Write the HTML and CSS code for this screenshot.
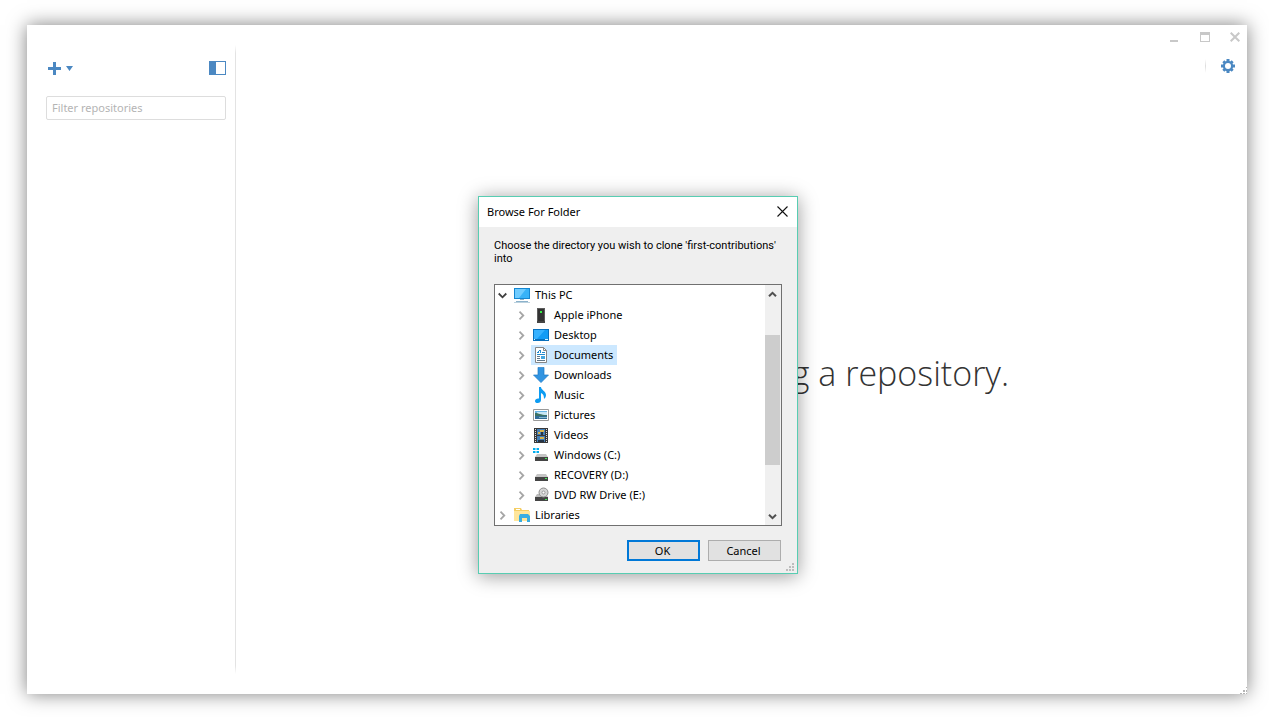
FILE: index.html
```html
<!DOCTYPE html>
<html lang="en">
<head>
<meta charset="utf-8">
<title>Browse For Folder</title>
<link rel="stylesheet" href="styles.css">
</head>
<body>
<div class="window">
  <aside class="sidebar">
    <div class="sidebar-tools">
      <button class="icon-button" aria-label="Add repository">
        <svg width="26" height="14" viewBox="0 0 26 14"><path fill="#4b88c2" d="M5 1h3v5h5v3H8v5H5V9H0V6h5zM18 5h7l-3.500 5z"/></svg>
      </button>
      <button class="icon-button" aria-label="Toggle sidebar">
        <svg width="17" height="14" viewBox="0 0 17 14"><path fill="#4b88c2" fill-rule="evenodd" d="M0 0h17v14H0zM7 1v12h9V1z"/></svg>
      </button>
    </div>
    <input class="filter" type="text" placeholder="Filter repositories" aria-label="Filter repositories">
  </aside>
  <div class="divider"></div>
  <main class="content">
    <div class="window-controls">
      <button class="icon-button" aria-label="Minimize"><svg width="10" height="10" viewBox="0 0 10 10"><path fill="#c8c8c8" d="M0 8h8v2H0z"/></svg></button>
      <button class="icon-button" aria-label="Maximize"><svg width="10" height="10" viewBox="0 0 10 10"><path fill="#c8c8c8" fill-rule="evenodd" d="M0 0h10v10H0zM1 3v6h8V3z"/></svg></button>
      <button class="icon-button" aria-label="Close window"><svg width="10" height="10" viewBox="0 0 10 10"><path stroke="#c8c8c8" stroke-width="2" d="M.7.7l8.600 8.600M9.300.7L.7 9.300"/></svg></button>
    </div>
    <div class="settings">
      <span class="settings-divider"></span>
      <button class="icon-button" aria-label="Settings"><svg width="14" height="14" viewBox="-7 -7 14 14"><g fill="#4b88c2"><path d="M-1.500-7h3v14h-3zM-7-1.500h14v3H-7z"/><path transform="rotate(45)" d="M-1.400-6.600h2.800V6.600h-2.800zM-6.600-1.400H6.600v2.800H-6.600z"/><circle r="5.200"/></g><circle r="3" fill="#fff"/></svg></button>
    </div>
    <h1 class="welcome">Get started by adding a repository.</h1>
  </main>
  <svg class="window-grip" width="7" height="7" viewBox="0 0 7 7"><path fill="#b4b4b4" d="M6 0h1v1H6zM3 3h2v2H3zM6 3h1v2H6zM0 6h2v1H0zM3 6h2v1H3zM6 6h1v1H6z"/></svg>

  <section class="dialog" role="dialog" aria-labelledby="dialog-title">
    <header class="dialog-head">
      <h2 id="dialog-title" class="dialog-title">Browse For Folder</h2>
      <button class="icon-button" aria-label="Close"><svg width="11" height="11" viewBox="0 0 11 11"><path stroke="#111" stroke-width="1.100" d="M.5.5l10 10M10.500.5l-10 10"/></svg></button>
    </header>
    <div class="dialog-body">
      <p class="prompt">Choose the directory you wish to clone 'first-contributions' into</p>
      <div class="tree-box">
        <ul class="tree" role="tree">
          <li class="row" role="treeitem" aria-expanded="true">
            <svg class="chevron" viewBox="0 0 9 9"><path fill="none" stroke="#404040" stroke-width="1.800" d="M.7 2.500l3.800 3.800 3.800-3.800"/></svg>
            <span class="item"><svg class="icon" viewBox="0 0 16 16"><path fill="#1587d1" d="M0 1h16v11H0z"/><path fill="#38b3f8" d="M1 2h14v9H1z"/><path fill="#70ccff" d="M1 2h11L5 11H1z"/><path fill="#8cb2cb" d="M6 12h4v1H6zM2 14h12v1H2z"/><path fill="#bcd2df" d="M0 15h16v1H0z"/></svg>This PC</span>
          </li>
          <li class="row child" role="treeitem">
            <svg class="chevron" viewBox="0 0 9 9"><path fill="none" stroke="#a6a6a6" stroke-width="1.800" d="M2.500.7l3.800 3.800-3.800 3.800"/></svg>
            <span class="item"><svg class="icon" viewBox="0 0 16 16"><path fill="#5d5d5d" d="M4 1h8v13H4z"/><path fill="#333" d="M5 2h6v12H5z"/><path fill="#454545" d="M4 14h8v2H4z"/><path fill="#36ef45" d="M7 4h2v2H7z"/></svg>Apple iPhone</span>
          </li>
          <li class="row child" role="treeitem">
            <svg class="chevron" viewBox="0 0 9 9"><path fill="none" stroke="#a6a6a6" stroke-width="1.800" d="M2.500.7l3.800 3.800-3.800 3.800"/></svg>
            <span class="item"><svg class="icon" viewBox="0 0 16 16"><path fill="#0870bd" d="M0 2h16v12H0z"/><path fill="#139cf5" d="M1 3h14v9H1z"/><path fill="#37b2ff" d="M1 3h11L4 12H1z"/><path fill="#d9f4ff" d="M1 12h1v1H1zM12 12h3v1h-3z"/></svg>Desktop</span>
          </li>
          <li class="row child" role="treeitem" aria-selected="true">
            <svg class="chevron" viewBox="0 0 9 9"><path fill="none" stroke="#a6a6a6" stroke-width="1.800" d="M2.500.7l3.800 3.800-3.800 3.800"/></svg>
            <span class="item selected"><svg class="icon" viewBox="0 0 16 16"><path fill="#fff" stroke="#858585" d="M2.500.5h8l3 3v12h-11z"/><path fill="none" stroke="#858585" d="M10.500.5v3h3"/><path fill="#238bd0" d="M6 3h2v1H6zM5 4h1v1H5zM7 4h1v2H7zM4 5h2v1H4zM9 5h3v1H9zM4 7h8v1H4z"/><path fill="#60778a" d="M4 9h3v1H4zM4 11h3v1H4zM4 13h8v1H4z"/><path fill="#42a5df" d="M8 9h4v3H8z"/></svg>Documents</span>
          </li>
          <li class="row child" role="treeitem">
            <svg class="chevron" viewBox="0 0 9 9"><path fill="none" stroke="#a6a6a6" stroke-width="1.800" d="M2.500.7l3.800 3.800-3.800 3.800"/></svg>
            <span class="item"><svg class="icon" viewBox="0 0 16 16"><path fill="#3194e1" stroke="#1d78c4" stroke-width=".7" d="M5 .4h6v7.600h4.500L8 15.600.5 8H5z"/></svg>Downloads</span>
          </li>
          <li class="row child" role="treeitem">
            <svg class="chevron" viewBox="0 0 9 9"><path fill="none" stroke="#a6a6a6" stroke-width="1.800" d="M2.500.7l3.800 3.800-3.800 3.800"/></svg>
            <span class="item"><svg class="icon" viewBox="0 0 16 16"><path fill="#0d9cf2" d="M6 0h2c0 3 5 4 5 8 0 2-1 3-2 4 0-3-.5-5-3-6v7c0 2-1.500 3-3.300 3C3 16 2 15.200 2 13.900c0-1.700 2-2.800 4-2.400z"/></svg>Music</span>
          </li>
          <li class="row child" role="treeitem">
            <svg class="chevron" viewBox="0 0 9 9"><path fill="none" stroke="#a6a6a6" stroke-width="1.800" d="M2.500.7l3.800 3.800-3.800 3.800"/></svg>
            <span class="item"><svg class="icon" viewBox="0 0 16 16"><path fill="#fff" stroke="#999" d="M.5 2.500h15v11H.5z"/><path fill="#68b4e4" d="M2 4h12v4H2z"/><path fill="#c7e6f4" d="M4 5h10v3H4z"/><path fill="#3d7264" d="M2 6c4 0 5 2 12 2v2H2z"/><path fill="#326d98" d="M2 9h12v3H2z"/><path fill="#85b9ca" d="M6 10h8v1H6z"/></svg>Pictures</span>
          </li>
          <li class="row child" role="treeitem">
            <svg class="chevron" viewBox="0 0 9 9"><path fill="none" stroke="#a6a6a6" stroke-width="1.800" d="M2.500.7l3.800 3.800-3.800 3.800"/></svg>
            <span class="item"><svg class="icon" viewBox="0 0 16 16"><path fill="#393939" d="M1 1h14v15H1z"/><path stroke="#ddd" stroke-dasharray="1 1" d="M2.500 2v13M13.500 2v13"/><path fill="#437eb6" d="M4 2h8v6H4zM4 9h8v6H4z"/><path fill="#d5b34f" d="M7 3h4v2H7zM5 5h2v2H5zM7 10h4v2H7z"/><path fill="#253446" d="M8 5h2v3H8zM5 13h6v2H5z"/></svg>Videos</span>
          </li>
          <li class="row child" role="treeitem">
            <svg class="chevron" viewBox="0 0 9 9"><path fill="none" stroke="#a6a6a6" stroke-width="1.800" d="M2.500.7l3.800 3.800-3.800 3.800"/></svg>
            <span class="item"><svg class="icon" viewBox="0 0 16 16"><path fill="#00adef" d="M0 1h2.500v2H0zM3.500 1H6v2H3.500zM0 4h2.500v2H0zM3.500 4H6v2H3.500z"/><path fill="#c5c5c5" d="M4 7h9l2 3H2z"/><path fill="#454545" d="M2 10h13v4H2z"/><path fill="#45ec57" d="M12 11h2v1h-2z"/></svg>Windows (C:)</span>
          </li>
          <li class="row child" role="treeitem">
            <svg class="chevron" viewBox="0 0 9 9"><path fill="none" stroke="#a6a6a6" stroke-width="1.800" d="M2.500.7l3.800 3.800-3.800 3.800"/></svg>
            <span class="item"><svg class="icon" viewBox="0 0 16 16"><path fill="#c5c5c5" d="M4 7h9l2 3H2z"/><path fill="#454545" d="M2 10h13v4H2z"/><path fill="#45ec57" d="M12 11h2v1h-2z"/></svg>RECOVERY (D:)</span>
          </li>
          <li class="row child" role="treeitem">
            <svg class="chevron" viewBox="0 0 9 9"><path fill="none" stroke="#a6a6a6" stroke-width="1.800" d="M2.500.7l3.800 3.800-3.800 3.800"/></svg>
            <span class="item"><svg class="icon" viewBox="0 0 16 16"><path fill="#bbb" d="M4 7h9l2 3H2z"/><path fill="#454545" d="M2 10h13v4H2z"/><path fill="#45ec57" d="M12 12h2v1h-2z"/><circle cx="10.500" cy="5.500" r="4.500" fill="#d5d5d5" stroke="#8e8e8e"/><circle cx="10.500" cy="5.500" r="1.500" fill="#fff" stroke="#999"/></svg>DVD RW Drive (E:)</span>
          </li>
          <li class="row" role="treeitem">
            <svg class="chevron" viewBox="0 0 9 9"><path fill="none" stroke="#a6a6a6" stroke-width="1.800" d="M2.500.7l3.800 3.800-3.800 3.800"/></svg>
            <span class="item"><svg class="icon" viewBox="0 0 16 16"><path fill="#f5ce63" d="M0 1h7l1 2h7v11H0z"/><path fill="#fff" d="M2 2h4v1H2z"/><path fill="#ffe69b" d="M0 4h16v10H0z"/><path fill="#38ade2" d="M5 9l1-2h8l2 2v6h-3v-4H8v4H5z"/></svg>Libraries</span>
          </li>
        </ul>
        <div class="scrollbar">
          <svg width="9" height="9" viewBox="0 0 9 9"><path fill="none" stroke="#505050" stroke-width="2" d="M1 6.300l3.500-3.500L8 6.300"/></svg>
          <div class="thumb"></div>
          <svg width="9" height="9" viewBox="0 0 9 9"><path fill="none" stroke="#505050" stroke-width="2" d="M1 2.700l3.500 3.500L8 2.700"/></svg>
        </div>
      </div>
      <div class="actions">
        <button class="button primary">OK</button>
        <button class="button">Cancel</button>
      </div>
    </div>
    <svg class="dialog-grip" width="8" height="8" viewBox="0 0 8 8"><path fill="#bdbdbd" d="M6 0h2v2H6zM3 3h2v2H3zM6 3h2v2H6zM0 6h2v2H0zM3 6h2v2H3zM6 6h2v2H6z"/></svg>
  </section>
</div>
</body>
</html>
```
FILE: styles.css
```css
* { box-sizing: border-box; }

body {
  margin: 0;
  min-height: 100vh;
  display: flex;
  padding: 25px 22px 23px 27px;
  background: #fff;
  color: #000;
  font: 11px/20px "Noto Sans", "Open Sans", sans-serif;
}

svg { display: block; flex: none; }

.window {
  position: relative;
  flex: 1;
  display: flex;
  background: #fff;
  box-shadow: 0 0 18px rgba(0, 0, 0, 0.5);
}

.icon-button {
  display: block;
  padding: 0;
  border: 0;
  background: none;
}

.sidebar {
  width: 208px;
  padding: 36px 9px 0 19px;
}

.sidebar-tools {
  display: flex;
  justify-content: space-between;
  padding-left: 2px;
}

.filter {
  display: block;
  width: 100%;
  height: 24px;
  margin-top: 21px;
  padding: 0 5px 2px;
  border: 1px solid #ddd;
  border-radius: 2px;
  background: #fff;
  font: inherit;
}

.filter::placeholder { color: #b4b4b4; opacity: 1; }

.divider {
  width: 1px;
  margin: 20px 0;
  background: linear-gradient(transparent, #e3e3e3 8px, #e3e3e3 calc(100% - 8px), transparent);
}

.content {
  flex: 1;
  display: flex;
  flex-direction: column;
}

.window-controls {
  display: flex;
  justify-content: flex-end;
  gap: 20px;
  padding: 7px 7px 0 0;
}

.settings {
  display: flex;
  justify-content: flex-end;
  gap: 15px;
  padding: 17px 12px 0 0;
}

.settings-divider {
  width: 1px;
  height: 14px;
  background: linear-gradient(transparent, #ddd, transparent);
}

.welcome {
  margin: 276px 0 0;
  padding-left: 6px;
  color: #333;
  font: 300 34px/48px "Open Sans", "Noto Sans", sans-serif;
  text-align: center;
}

.window-grip {
  position: absolute;
  right: 0;
  bottom: 0;
}

.dialog {
  position: absolute;
  top: 171px;
  left: calc(50% - 159px);
  width: 320px;
  border: 1px solid #58cdb2;
  background: #efefef;
  box-shadow: 0 2px 18px rgba(0, 0, 0, 0.4);
}

.dialog-head {
  display: flex;
  align-items: center;
  justify-content: space-between;
  height: 30px;
  padding: 0 9px 2px 8px;
  background: #fff;
}

.dialog-title {
  margin: 0;
  padding-top: 2px;
  font: inherit;
}

.dialog-body { padding: 12px 15px; }

.prompt {
  margin: 0 0 19px;
  font: 11px/13px Roboto, "Noto Sans", sans-serif;
}

.tree-box {
  display: flex;
  height: 242px;
  border: 1px solid #707070;
  background: #fff;
}

.tree {
  flex: 1;
  margin: 0;
  padding: 0;
  list-style: none;
}

.row {
  display: flex;
  align-items: center;
  height: 20px;
  padding-left: 3px;
}

.child { padding-left: 22px; }

.chevron {
  width: 9px;
  height: 9px;
  margin-right: 5px;
}

.item {
  display: flex;
  align-items: center;
  gap: 5px;
  padding: 0 4px 0 2px;
  white-space: nowrap;
}

.icon { width: 16px; height: 16px; }

.selected { background: #cce8ff; }

.scrollbar {
  display: flex;
  flex-direction: column;
  align-items: center;
  justify-content: space-between;
  width: 16px;
  padding: 5px 1px 4px 0;
  background: #f0f0f0;
}

.thumb {
  width: 15px;
  height: 130px;
  margin-bottom: 11px;
  background: #cdcdcd;
}

.actions {
  display: flex;
  justify-content: flex-end;
  gap: 8px;
  margin-top: 14px;
  padding-right: 1px;
}

.button {
  width: 73px;
  height: 21px;
  padding: 0 2px 0 0;
  border: 1px solid #adadad;
  background: #e1e1e1;
  font: 11px/16px "Noto Sans", "Open Sans", sans-serif;
  color: #000;
}

.primary { border: 2px solid #0078d7; }

.dialog-grip {
  position: absolute;
  right: 3px;
  bottom: 2px;
}
```
